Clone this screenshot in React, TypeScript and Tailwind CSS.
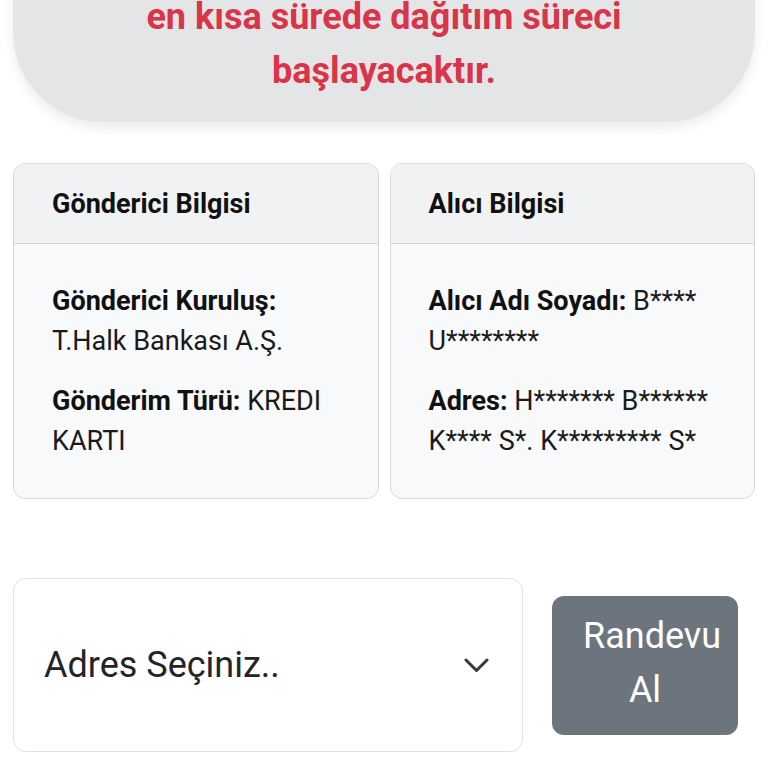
import React from "react";

export default function App() {
  return (
    <div className="w-[768px] min-h-[768px] bg-white px-[13px] font-['Roboto','Liberation_Sans',sans-serif] text-[#212529] overflow-hidden">
      <div className="mt-[-200px] pt-[190px] pb-[24px] rounded-[90px] bg-[#e4e5e7] shadow-[0_6px_12px_rgba(0,0,0,0.08)]">
        <p className="text-center text-[36px] leading-[54px] font-bold text-[#d93447]">
          en kısa sürede dağıtım süreci
          <br />
          başlayacaktır.
        </p>
      </div>

      <div className="mt-[41px] grid grid-cols-2 gap-[11px]">
        <div className="rounded-[12px] border border-[#d9dadc] bg-[#f8f9fa] overflow-hidden">
          <div className="h-[80px] flex items-center px-[38px] bg-[#f1f2f3] border-b border-[#d4d5d7]">
            <span className="text-[27px] leading-[40px] font-bold text-[#111]">Gönderici Bilgisi</span>
          </div>
          <div className="px-[38px] pt-[37px] pb-[37px] flex flex-col gap-[20px] text-[27px] leading-[40px] text-[#1a1a1a]">
            <p>
              <b className="font-bold text-[#111]">Gönderici Kuruluş:</b> T.Halk Bankası A.Ş.
            </p>
            <p>
              <b className="font-bold text-[#111]">Gönderim Türü:</b> KREDI KARTI
            </p>
          </div>
        </div>
        <div className="rounded-[12px] border border-[#d9dadc] bg-[#f8f9fa] overflow-hidden">
          <div className="h-[80px] flex items-center px-[38px] bg-[#f1f2f3] border-b border-[#d4d5d7]">
            <span className="text-[27px] leading-[40px] font-bold text-[#111]">Alıcı Bilgisi</span>
          </div>
          <div className="px-[38px] pt-[37px] pb-[37px] flex flex-col gap-[20px] text-[27px] leading-[40px] text-[#1a1a1a]">
            <p>
              <b className="font-bold text-[#111]">Alıcı Adı Soyadı:</b> B**** U********
            </p>
            <p>
              <b className="font-bold text-[#111]">Adres:</b> H******* B****** K**** S*. K********* S*
            </p>
          </div>
        </div>
      </div>

      <div className="mt-[79px] flex items-center">
        <div className="w-[510px] h-[174px] rounded-[13px] border border-[#dee2e6] bg-white pl-[30px] pr-[33px] flex items-center justify-between">
          <span className="text-[36px] leading-[54px] text-[#212529]">Adres Seçiniz..</span>
          <svg width="25" height="15" viewBox="0 0 25 15" fill="none">
            <path d="M2 2 L12.5 12.5 L23 2" stroke="#343a40" strokeWidth="3" strokeLinecap="round" strokeLinejoin="round" />
          </svg>
        </div>
        <button className="ml-[29px] w-[186px] rounded-[12px] bg-[#6c757d] px-[31px] pt-[13px] pb-[18px] text-center text-[36px] leading-[54px] text-white">
          Randevu Al
        </button>
      </div>
    </div>
  );
}
